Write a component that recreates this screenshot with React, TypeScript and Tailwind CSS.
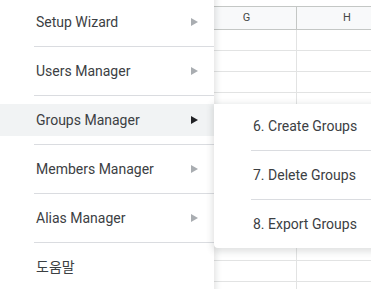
import React from 'react';

const MAIN_ITEMS = [
  { label: 'Setup Wizard', arrow: true },
  { label: 'Users Manager', arrow: true },
  { label: 'Groups Manager', arrow: true, active: true },
  { label: 'Members Manager', arrow: true },
  { label: 'Alias Manager', arrow: true },
  { label: '도움말', arrow: false },
];

const SUB_ITEMS = ['6. Create Groups', '7. Delete Groups', '8. Export Groups'];

function Arrow({ active }: { active?: boolean }) {
  return (
    <svg width="7" height="8" viewBox="0 0 7 8" className="shrink-0">
      <polygon points="0,0 7,4 0,8" fill={active ? '#202124' : '#a9adb1'} />
    </svg>
  );
}

function Separator({ inset }: { inset: string }) {
  return (
    <div className="py-[8px]">
      <div className={`h-px bg-[#dadce0] ${inset}`} />
    </div>
  );
}

export default function App() {
  const rows = Array.from({ length: 13 });

  return (
    <div
      className="relative w-[371px] h-[289px] overflow-hidden bg-white text-[14px] text-[#3c4043]"
      style={{ fontFamily: 'Roboto, "Noto Sans CJK KR", sans-serif' }}
    >
      {/* Sheet behind the menus */}
      <div className="pt-[6px] ml-[197px]">
        <div className="border-t border-[#c4c7c5] grid grid-cols-[100px_100px] bg-[#f8f9fa] h-[24px] border-b border-b-[#c4c7c5]">
          <div className="flex items-center justify-center text-[11px] text-[#444746] border-r border-[#c4c7c5]">G</div>
          <div className="flex items-center justify-center text-[11px] text-[#444746]">H</div>
        </div>
        {rows.map((_, i) => (
          <div key={i} className="grid grid-cols-[100px_100px] h-[21px] border-b border-[#e2e3e3]">
            <div className="border-r border-[#e2e3e3]" />
            <div />
          </div>
        ))}
      </div>

      {/* Main menu */}
      <div className="absolute left-0 -top-[10px] w-[214px] bg-white pt-[16px] pb-[8px] shadow-[0_2px_6px_2px_rgba(60,64,67,0.15)]">
        {MAIN_ITEMS.map((item, i) => (
          <div key={item.label}>
            {i > 0 && <Separator inset="ml-[34px]" />}
            <div
              className={`h-[32px] flex items-center pl-[36px] pr-[16px] ${item.active ? 'bg-[#f1f3f4]' : ''}`}
            >
              <span className="flex-1">{item.label}</span>
              {item.arrow && <Arrow active={item.active} />}
            </div>
          </div>
        ))}
      </div>

      {/* Sub menu */}
      <div className="absolute left-[214px] top-[104px] w-[190px] bg-white pt-[6px] pb-[8px] rounded-bl-[4px] shadow-[0_2px_6px_2px_rgba(60,64,67,0.15)]">
        {SUB_ITEMS.map((label, i) => (
          <div key={label}>
            {i > 0 && <Separator inset="ml-[37px]" />}
            <div className="h-[32px] flex items-center pl-[39px]">{label}</div>
          </div>
        ))}
      </div>
    </div>
  );
}
